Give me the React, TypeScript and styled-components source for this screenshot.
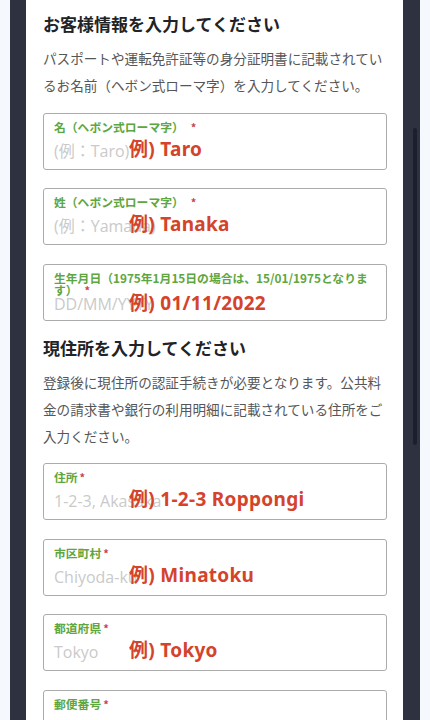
import React from "react";
import styled, { createGlobalStyle } from "styled-components";

const Global = createGlobalStyle`
  html, body { margin: 0; padding: 0; background: #f5f8fc; }
  body { font-family: "Noto Sans CJK JP", "Noto Sans", sans-serif; }
  * { box-sizing: border-box; }
`;

const Page = styled.div`
  height: 720px;
  overflow: hidden;
  padding-left: 10px;
  padding-right: 10px;
`;

const Frame = styled.div`
  display: flex;
  height: 100%;
  background: #2e3140;
  padding-left: 16px;
`;

const Panel = styled.main`
  flex: 1;
  background: #ffffff;
  padding: 12px 16px 0 17px;
  display: flex;
  flex-direction: column;
  gap: 15px;
`;

const Gutter = styled.div`
  width: 17px;
  padding-top: 128px;
  padding-left: 10px;
`;

const Thumb = styled.div`
  width: 4px;
  height: 317px;
  border-radius: 2px;
  background: #1c1f2c;
`;

const Section = styled.section`
  display: flex;
  flex-direction: column;
`;

const Heading = styled.h2`
  margin: 0 0 9px;
  font-family: "Noto Sans CJK JP", sans-serif;
  font-size: 17px;
  font-weight: 700;
  line-height: 24px;
  color: #222326;
`;

const Lead = styled.p`
  margin: 0 0 13.5px;
  font-family: "Noto Sans CJK JP", sans-serif;
  font-size: 13.6px;
  line-height: 27px;
  color: #555658;
`;

const Fields = styled.div`
  display: flex;
  flex-direction: column;
  gap: 18.5px;
`;

const Field = styled.label`
  position: relative;
  display: flex;
  flex-direction: column;
  height: 57px;
  padding: 7px 10px 0;
  border: 1px solid #ababab;
  border-radius: 3px;
  overflow: hidden;
  background: #fff;
`;

const Label = styled.span`
  font-family: "Noto Sans CJK JP", sans-serif;
  font-size: 11.8px;
  font-weight: 700;
  line-height: 12px;
  color: #5ea640;
`;

const Required = styled.span<{ $spaced?: boolean }>`
  margin-left: ${(p) => (p.$spaced ? "7px" : "2px")};
  color: #c9434f;
  font-size: 11px;
  vertical-align: top;
`;

const Placeholder = styled.span<{ $tight?: boolean }>`
  margin-top: ${(p) => (p.$tight ? "-2px" : "8px")};
  font-family: "Open Sans", "Noto Sans CJK JP", sans-serif;
  font-size: 16px;
  line-height: 20px;
  color: #cacaca;
  white-space: nowrap;
`;

const Example = styled.span<{ $top: number }>`
  position: absolute;
  left: 85px;
  top: ${(p) => p.$top}px;
  font-family: "Noto Sans", "Noto Sans CJK JP", sans-serif;
  font-size: 19px;
  font-weight: 700;
  line-height: 24px;
  letter-spacing: 0.3px;
  color: #d4432b;
  white-space: nowrap;
`;

type F = {
  label: string;
  spaced?: boolean;
  placeholder: string;
  example: string;
  tight?: boolean;
};

const FieldItem = ({ label, spaced, placeholder, example, tight }: F) => (
  <Field>
    <Label>
      {label}
      <Required $spaced={spaced}>*</Required>
    </Label>
    <Placeholder $tight={tight}>{placeholder}</Placeholder>
    {example && <Example $top={tight ? 26 : 23}>{example}</Example>}
  </Field>
);

const customer: F[] = [
  { label: "名（ヘボン式ローマ字）", spaced: true, placeholder: "(例：Taro)", example: "例) Taro" },
  { label: "姓（ヘボン式ローマ字）", spaced: true, placeholder: "(例：Yamada)", example: "例) Tanaka" },
  {
    label: "生年月日（1975年1月15日の場合は、15/01/1975となります）",
    spaced: true,
    placeholder: "DD/MM/YYYY",
    example: "例) 01/11/2022",
    tight: true,
  },
];

const address: F[] = [
  { label: "住所", placeholder: "1-2-3, Akasaka", example: "例) 1-2-3 Roppongi" },
  { label: "市区町村", placeholder: "Chiyoda-ku", example: "例) Minatoku" },
  { label: "都道府県", placeholder: "Tokyo", example: "例) Tokyo" },
  { label: "郵便番号", placeholder: "", example: "" },
];

export default function App() {
  return (
    <>
      <Global />
      <Page>
        <Frame>
          <Panel>
            <Section>
              <Heading>お客様情報を入力してください</Heading>
              <Lead>
                パスポートや運転免許証等の身分証明書に記載されているお名前（ヘボン式ローマ字）を入力してください。
              </Lead>
              <Fields>
                {customer.map((f) => (
                  <FieldItem key={f.label} {...f} />
                ))}
              </Fields>
            </Section>
            <Section>
              <Heading>現住所を入力してください</Heading>
              <Lead>
                登録後に現住所の認証手続きが必要となります。公共料金の請求書や銀行の利用明細に記載されている住所をご入力ください。
              </Lead>
              <Fields>
                {address.map((f) => (
                  <FieldItem key={f.label} {...f} />
                ))}
              </Fields>
            </Section>
          </Panel>
          <Gutter>
            <Thumb />
          </Gutter>
        </Frame>
      </Page>
    </>
  );
}
